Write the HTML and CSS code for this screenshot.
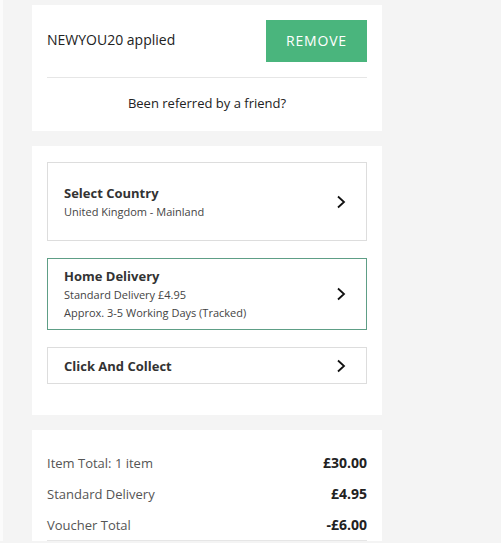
FILE: index.html
```html
<!DOCTYPE html>
<html lang="en">
<head>
    <meta charset="UTF-8">
    <meta name="viewport" content="width=device-width, initial-scale=1.0">
    <title>Checkout</title>
    <link rel="stylesheet" href="styles.css">
</head>
<body>
    <div class="page">
        <div class="card voucher">
            <div class="voucher-row">
                <span class="voucher-code">NEWYOU20 applied</span>
                <button class="remove-btn">REMOVE</button>
            </div>
            <div class="referral">Been referred by a friend?</div>
        </div>

        <div class="card delivery">
            <div class="option option-tall">
                <div class="option-text">
                    <div class="option-title">Select Country</div>
                    <div class="option-sub">United Kingdom - Mainland</div>
                </div>
                <svg class="chevron" viewBox="0 0 10 14"><polyline points="2,1.5 8,7 2,12.5"/></svg>
            </div>
            <div class="option option-selected">
                <div class="option-text">
                    <div class="option-title">Home Delivery</div>
                    <div class="option-sub">Standard Delivery £4.95</div>
                    <div class="option-sub">Approx. 3-5 Working Days (Tracked)</div>
                </div>
                <svg class="chevron" viewBox="0 0 10 14"><polyline points="2,1.5 8,7 2,12.5"/></svg>
            </div>
            <div class="option">
                <div class="option-text">
                    <div class="option-title">Click And Collect</div>
                </div>
                <svg class="chevron" viewBox="0 0 10 14"><polyline points="2,1.5 8,7 2,12.5"/></svg>
            </div>
        </div>

        <div class="card totals">
            <div class="total-row"><span>Item Total: 1 item</span><b>£30.00</b></div>
            <div class="total-row"><span>Standard Delivery</span><b>£4.95</b></div>
            <div class="total-row last"><span>Voucher Total</span><b>-£6.00</b></div>
        </div>
    </div>
</body>
</html>
```

FILE: styles.css
```css
body {
    margin: 0;
    background-color: #f4f4f4;
    font-family: "Open Sans", "Liberation Sans", sans-serif;
    color: #222;
    border-left: 3px solid #fbfbfb;
}

.page {
    width: 350px;
    margin-left: 29px;
    padding-top: 5px;
    display: flex;
    flex-direction: column;
    gap: 15px;
}

.card {
    background-color: #fff;
    padding: 0 15px;
}

.voucher-row {
    display: flex;
    justify-content: space-between;
    align-items: center;
    padding: 15px 0 15px;
    border-bottom: 1px solid #e6e6e6;
}

.voucher-code {
    font-size: 14px;
    margin-top: -3px;
}

.remove-btn {
    width: 101px;
    height: 42px;
    background-color: #4ab57d;
    color: #fff;
    border: none;
    font-family: inherit;
    font-size: 14px;
    letter-spacing: 0.8px;
    padding-bottom: 3px;
}

.referral {
    text-align: center;
    font-size: 13px;
    padding: 16px 0 19px;
}

.delivery {
    padding-top: 16px;
    padding-bottom: 31px;
    display: flex;
    flex-direction: column;
    gap: 17px;
}

.option {
    border: 1px solid #ddd;
    display: flex;
    align-items: center;
    justify-content: space-between;
    padding: 8px 20px 8px 16px;
    min-height: 19px;
}

.option-tall {
    min-height: 61px;
}

.option-selected {
    border-color: #5e9e86;
}

.option-title {
    font-size: 13px;
    font-weight: 700;
    color: #333;
}

.option-sub {
    font-size: 11px;
    line-height: 17px;
    color: #444;
    margin-top: 1px;
}

.chevron {
    width: 10px;
    height: 14px;
    fill: none;
    stroke: #111;
    stroke-width: 1.8;
}

.totals {
    padding-top: 17px;
}

.total-row {
    display: flex;
    justify-content: space-between;
    align-items: center;
    height: 31px;
    font-size: 13px;
    color: #555;
}

.total-row b {
    color: #222;
    font-size: 14px;
}

.total-row.last {
    border-bottom: 1px solid #e6e6e6;
}
```
